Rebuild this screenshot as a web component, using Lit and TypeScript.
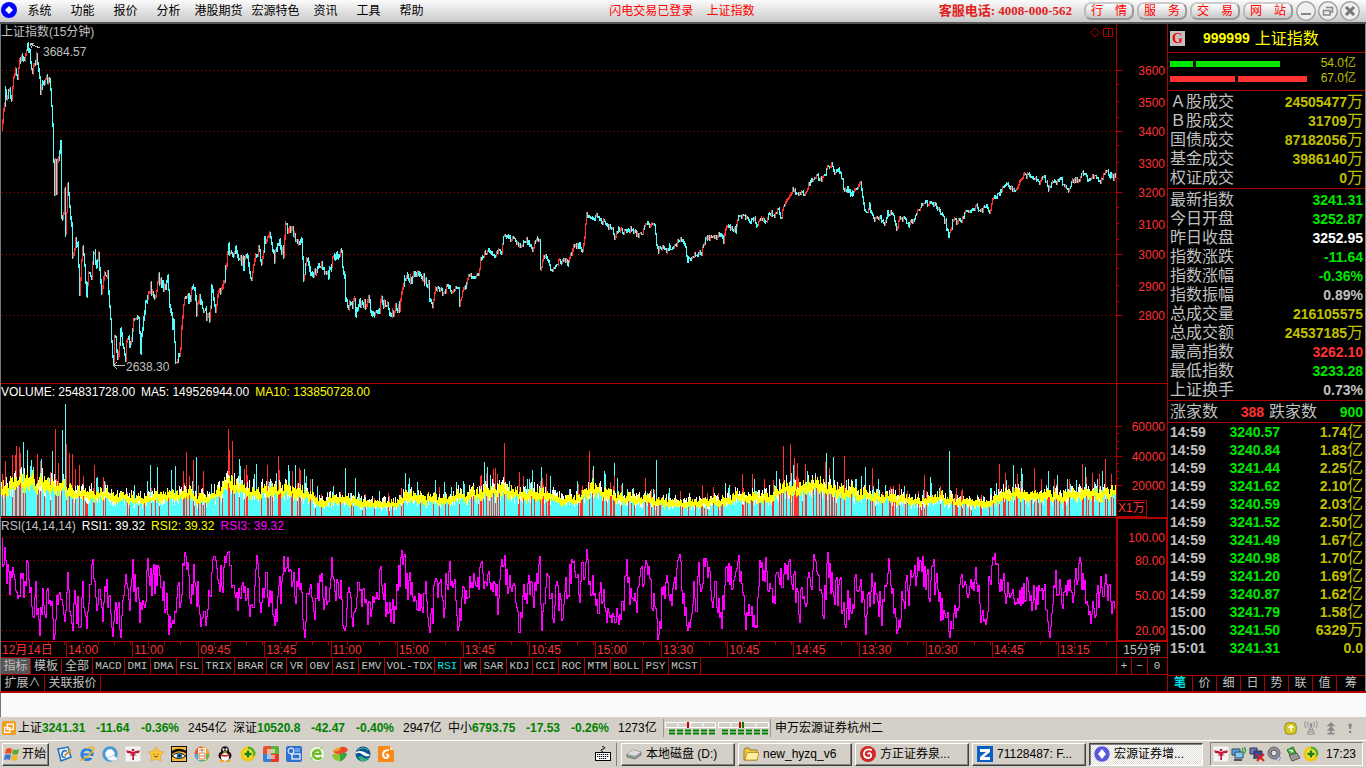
import { LitElement, html, svg, css } from "lit";
import { customElement, state } from "lit/decorators.js";
import { classMap } from "lit/directives/class-map.js";

type Point = [number, number];

/* ---------- chart data ---------- */

const PLOT_LEFT = 1;
const PLOT_WIDTH = 1115;

function randomSource(seed: number) {
  let s = seed;
  return () => {
    s = (s * 1664525 + 1013904223) % 4294967296;
    return s / 4294967296;
  };
}

function parsePoints(text: string): Point[] {
  return text.trim().split(/\s+/).map((p) => p.split(",").map(Number) as Point);
}

function sample(points: Point[], from: number, to: number): number[] {
  const out: number[] = [];
  let k = 0;
  for (let x = from; x <= to; x++) {
    while (k < points.length - 2 && points[k + 1][0] <= x) k++;
    const [x0, y0] = points[k];
    const [x1, y1] = points[k + 1];
    const t = x1 === x0 ? 1 : Math.max(0, Math.min(1, (x - x0) / (x1 - x0)));
    out.push(y0 + (y1 - y0) * t);
  }
  return out;
}

const PRICE = parsePoints(`
2,130 3,118 5,100 6,93 8,98 10,92 12,95 14,78 16,68 18,76 20,60 22,56 24,62 26,52 29,46 31,62 33,76 35,62 37,58 39,66
41,92 43,84 46,80 49,78 51,84 53,128 54,163 55,190 56,160 57,192 58,163 60,155 61,145 62,216 64,216 65,190 66,232 68,185
70,205 72,225 73,256 76,240 78,245 80,290 83,250 85,262 87,298 89,270 92,280 94,250 97,265 99,255 102,296 105,270 108,275
110,305 112,340 114,364 115,332 118,358 121,332 124,345 126,356 128,335 131,345 134,318 139,322 141,350 145,308 148,297
151,288 155,300 159,277 162,285 166,287 168,277 170,305 173,325 174,320 176,360 178,363 181,345 184,305 187,293 190,300
194,283 197,310 200,300 203,306 207,315 210,320 212,288 216,307 220,292 225,278 229,248 232,253 236,251 240,256 244,264
247,252 252,280 255,260 259,248 262,264 265,240 270,235 275,260 278,240 284,253 286,225 290,233 293,228 297,243 302,242
304,276 307,260 311,270 315,273 321,263 326,276 331,271 333,257 338,255 342,254 345,280 346,300 350,307 355,300 356,317
360,300 364,307 369,299 373,315 379,310 382,300 388,306 392,318 396,308 400,307 402,295 405,278 411,280 416,273 422,276
426,282 427,288 429,286 430,303 433,305 436,287 440,290 445,293 448,283 452,292 456,285 459,290 460,308 463,288 466,286
469,276 475,275 479,274 481,260 485,253 491,250 495,257 499,250 502,255 504,235 510,238 515,238 520,246 527,240 533,249
537,240 540,237 541,268 545,255 549,260 552,272 556,265 560,261 565,260 568,263 574,247 580,245 583,250 585,235 587,213
592,220 597,216 602,223 605,220 608,226 613,228 615,239 619,228 625,232 632,229 638,235 643,233 646,224 655,226 657,243
659,250 663,248 667,252 670,247 676,246 680,238 685,243 688,260 692,257 696,254 702,252 706,238 713,237 718,236 721,234
724,241 727,226 735,229 736,232 739,215 745,216 751,220 755,218 757,227 762,218 766,222 770,213 775,214 779,208 782,220
784,205 788,197 793,189 798,192 805,193 811,182 817,174 822,180 825,176 828,168 832,164 835,173 840,170 842,176 845,192
848,189 852,194 856,189 861,181 864,205 867,214 870,206 875,220 880,217 885,225 888,213 893,212 897,231 900,217 905,219
909,225 914,222 917,213 922,205 927,203 934,203 940,210 946,222 949,236 954,219 961,222 966,211 971,210 977,206 981,210
987,207 991,211 993,200 998,194 1003,188 1009,184 1013,189 1017,189 1022,177 1028,175 1034,178 1040,181 1044,175 1049,188
1054,182 1062,180 1068,191 1073,180 1080,180 1083,172 1090,181 1095,175 1101,183 1106,169 1110,175 1114,177 1116,175`);

function buildPrice() {
  const rnd = randomSource(7);
  const base = sample(PRICE, 2, 1116);
  const close = base.map((y, i) => y + (rnd() - 0.5) * (i < 430 ? 9 : 5));
  let up = "";
  let down = "";
  for (let i = 0; i < close.length - 1; i++) {
    const a = close[i];
    const b = close[i + 1];
    const wick = rnd() * (i < 430 ? 3 : 1.5);
    const top = Math.round(Math.min(a, b) - wick);
    const bottom = Math.round(Math.max(a, b) + wick * 0.7) + 1;
    const seg = `M${i + 2}.5 ${top}V${bottom}`;
    if (b < a - 0.6 && rnd() < 0.7) up += seg;
    else down += seg;
  }
  return { up, down };
}

const VOLUME_LEVEL = parsePoints(`
0,28 8,36 25,38 45,36 60,32 80,28 100,24 140,19 155,22 185,26 200,20 215,22 228,38 250,28 285,29 303,28 318,16 345,20
360,15 395,14 405,22 440,20 470,24 505,30 520,24 540,27 560,18 580,20 590,33 610,23 650,18 670,16 700,15 730,20 765,22
782,30 800,32 830,32 860,26 890,20 920,17 945,22 960,15 988,15 1005,26 1030,23 1080,24 1116,28`);

const VOLUME_SPIKES: [number, number, number][] = [
  [2, 42, 1], [5, 55, 1], [12, 61, 1], [16, 70, 1], [19, 69, 1], [23, 74, 0], [27, 66, 0], [37, 60, 0], [41, 57, 0],
  [52, 65, 0], [55, 87, 1], [58, 53, 1], [62, 86, 0], [65, 112, 0], [66, 72, 1], [69, 63, 1], [72, 62, 1], [79, 51, 1],
  [94, 51, 1], [150, 51, 0], [157, 49, 0], [171, 46, 0], [175, 50, 0], [186, 64, 1], [193, 56, 1], [196, 59, 0],
  [203, 45, 1], [228, 87, 1], [232, 75, 1], [239, 57, 0], [246, 51, 1], [256, 52, 0], [267, 51, 1], [278, 60, 1],
  [288, 51, 0], [295, 51, 0], [304, 47, 0], [345, 48, 0], [355, 38, 0], [405, 43, 0], [484, 54, 0], [487, 49, 0],
  [493, 47, 1], [504, 73, 1], [541, 49, 0], [550, 40, 0], [589, 65, 1], [592, 46, 1], [614, 53, 0], [656, 56, 0],
  [645, 38, 1], [702, 30, 1], [742, 42, 1], [752, 42, 1], [783, 70, 1], [790, 72, 1], [794, 58, 1], [797, 52, 1],
  [826, 63, 0], [833, 59, 0], [844, 60, 1], [855, 37, 0], [865, 49, 0], [872, 48, 1], [924, 41, 1], [930, 39, 0],
  [949, 65, 0], [999, 52, 1], [1013, 51, 0], [1021, 48, 0], [1034, 48, 1], [1048, 45, 0], [1057, 41, 0],
  [1082, 52, 1], [1085, 49, 0], [1105, 57, 1], [1111, 42, 1],
];

function buildVolume() {
  const rnd = randomSource(31);
  const level = sample(VOLUME_LEVEL, 1, 1115);
  const floor = 516;
  let up = "";
  let down = "";
  let ma5 = "";
  let ma10 = "";
  let drift = 0;
  level.forEach((h, i) => {
    const x = i + 1;
    drift = drift * 0.6 + (rnd() - 0.5) * h * 0.2;
    const m = h * 0.84 + drift;
    const roll = rnd();
    const tall = roll < 0.2 ? h * (1.1 + rnd() * 0.7) : m - 1;
    const seg = `M${x}.5 ${Math.round(floor - tall)}V${floor}`;
    if (rnd() < (roll < 0.2 ? 0.4 : 0.13)) up += seg;
    else down += seg;
    const mid = floor - m;
    if (rnd() < 0.45) ma5 += `M${x}.5 ${Math.round(mid - 3 - rnd() * h * 0.35)}V${Math.round(mid + 3)}`;
    else if (rnd() < 0.35) ma5 += `M${x}.5 ${Math.round(mid)}V${Math.round(mid + 3 + h * 0.2)}`;
    ma10 += `M${x}.5 ${Math.round(mid - 1 - rnd() * h * 0.25)}V${Math.round(mid + 2 + rnd() * h * 0.15)}`;
  });
  for (const [x, h, isUp] of VOLUME_SPIKES) {
    const seg = `M${x}.5 ${floor - h}V${floor}`;
    if (isUp) up += seg;
    else down += seg;
  }
  return { up, down, ma5, ma10 };
}

const RSI = parsePoints(`
2,538 3,578 5,549 7,580 10,583 13,565 15,595 19,578 22,566 24,588 28,574 31,595 33,620 36,588 40,626 44,590 47,600 50,585
54,638 58,588 64,625 68,582 72,620 76,600 80,618 83,588 87,615 93,572 98,605 101,588 104,605 107,583 113,638 116,600
121,622 126,578 130,600 133,570 140,625 148,567 152,590 160,566 167,610 172,628 176,605 181,590 186,556 190,600 194,578
201,605 207,620 212,570 218,592 222,574 229,564 235,590 241,600 247,595 252,618 257,570 261,605 266,567 270,590 274,620
280,600 285,566 289,580 293,597 299,585 305,635 309,590 314,620 320,577 325,600 332,566 336,590 340,585 345,635 350,590
355,618 360,580 366,605 370,618 375,600 381,571 386,600 391,620 396,600 403,560 407,590 413,580 420,605 426,590 430,633
435,590 440,575 444,600 449,568 454,590 459,626 463,590 467,600 471,580 477,590 481,559 488,590 494,578 498,600 504,564
508,590 514,595 519,622 523,600 527,585 532,600 536,576 540,567 542,635 546,590 552,610 558,598 563,605 569,580 575,567
580,595 587,552 590,580 594,585 599,615 604,580 609,615 615,625 620,600 627,580 633,597 640,585 646,570 651,590 655,600
658,639 663,590 668,597 674,580 679,563 684,600 688,634 694,595 700,580 706,555 711,590 717,597 722,610 728,570 733,590
739,563 744,605 750,618 756,625 760,580 766,570 771,600 778,580 785,578 790,570 796,595 802,600 810,580 816,566 823,610
828,568 835,590 841,600 846,626 852,590 860,572 866,630 871,590 877,600 883,610 890,575 898,630 902,600 908,588 914,585
921,561 927,590 933,580 940,600 943,620 950,625 957,595 965,566 970,590 976,574 983,612 987,600 992,561 997,575 1003,590
1009,600 1014,590 1021,588 1030,580 1036,605 1042,572 1050,630 1055,585 1062,600 1068,592 1076,590 1080,567 1086,605
1091,622 1095,600 1101,590 1106,567 1111,600 1114,615 1116,590`);

function buildRsi() {
  const rnd = randomSource(99);
  let swing = 0;
  const ys = sample(RSI, 2, 1115).map((y) => {
    swing = swing * 0.3 + (rnd() - 0.5) * 38;
    const edge = Math.min(1, Math.max(0.3, (45 - Math.abs(y - 594)) / 25));
    return Math.max(538, Math.min(639, y + swing * edge));
  });
  let d = "";
  for (let i = 0; i < ys.length - 1; i++) {
    const a = Math.round(Math.min(ys[i], ys[i + 1]));
    const b = Math.round(Math.max(ys[i], ys[i + 1])) + 1;
    d += `M${i + 2}.5 ${a}V${b}`;
  }
  return d;
}

const price = buildPrice();
const volume = buildVolume();
const rsi = buildRsi();

/* ---------- text data ---------- */

const MENUS = ["系统", "功能", "报价", "分析", "港股期货", "宏源特色", "资讯", "工具", "帮助"];
const TOP_BUTTONS = ["行情", "服务", "交易", "网站"];
const PRICE_LABELS: [string, number][] = [
  ["3600", 70], ["3500", 102], ["3400", 131], ["3300", 163], ["3200", 192],
  ["3100", 224], ["3000", 254], ["2900", 286], ["2800", 315],
];
const TIMES = ["12月14日", "14:00", "11:00", "09:45", "13:45", "11:00", "15:00", "13:45", "10:45", "15:00", "13:30",
  "10:45", "14:45", "13:30", "10:30", "14:45", "13:15"];
const TURNOVER = [["Ａ股成交", "24505477万"], ["Ｂ股成交", "31709万"], ["国债成交", "87182056万"],
  ["基金成交", "3986140万"], ["权证成交", "0万"]];
const QUOTES = [
  ["最新指数", "3241.31", "green"], ["今日开盘", "3252.87", "green"], ["昨日收盘", "3252.95", "white"],
  ["指数涨跌", "-11.64", "green"], ["指数涨幅", "-0.36%", "green"], ["指数振幅", "0.89%", "grey"],
  ["总成交量", "216105575", "gold"], ["总成交额", "24537185万", "gold"], ["最高指数", "3262.10", "red"],
  ["最低指数", "3233.28", "green"], ["上证换手", "0.73%", "grey"],
];
const TICKS = [
  ["14:59", "3240.57", "1.74亿"], ["14:59", "3240.84", "1.83亿"], ["14:59", "3241.44", "2.25亿"],
  ["14:59", "3241.62", "2.10亿"], ["14:59", "3240.59", "2.03亿"], ["14:59", "3241.52", "2.50亿"],
  ["14:59", "3241.49", "1.67亿"], ["14:59", "3240.98", "1.70亿"], ["14:59", "3241.20", "1.69亿"],
  ["14:59", "3240.87", "1.62亿"], ["15:00", "3241.79", "1.58亿"], ["15:00", "3241.50", "6329万"],
  ["15:01", "3241.31", "0.0"],
];
const SIDE_TABS = ["笔", "价", "细", "日", "势", "联", "值", "筹"];
const INDICATORS = ["MACD", "DMI", "DMA", "FSL", "TRIX", "BRAR", "CR", "VR", "OBV", "ASI", "EMV", "VOL-TDX", "RSI", "WR",
  "SAR", "KDJ", "CCI", "ROC", "MTM", "BOLL", "PSY", "MCST"];
const INDEXES = [
  ["上证", "3241.31", "-11.64", "-0.36%", "2454亿"],
  ["深证", "10520.8", "-42.47", "-0.40%", "2947亿"],
  ["中小", "6793.75", "-17.53", "-0.26%", "1273亿"],
];

/* ---------- icons, each on a 16 x 16 grid ---------- */

const dragonfly = svg`<rect width="16" height="16" rx="1" fill="#f4f4f4" stroke="#bbb" stroke-width=".6"/>
  <path d="M1 4.500Q5 4 8 6Q11 4 15 4.500L14 7Q11 7 9 8L12 9.500L9 9.500V14H7.300V9.500L4 9.500L7 8Q4 7 2 7Z" fill="#c01838"/><circle cx="8" cy="4" r="1.300" fill="#c01838"/>`;
const plusBall = svg`<circle cx="8" cy="8" r="7.500" fill="#f0c810"/><path d="M8 .5A7.500 7.500 0 0 1 15.500 8Q13 13 8 10Z" fill="#48b030"/>
  <circle cx="8" cy="8" r="5" fill="#f8e038"/><path d="M8 4.500V11.500M4.500 8H11.500" stroke="#188018" stroke-width="2.400"/>`;
const diamondBall = svg`<circle cx="8" cy="8" r="7.700" fill="#5858d8"/><path d="M8 3L12 8L8 13L4 8Z" fill="#fff"/>`;

const QUICK: [string, unknown][] = [
  ["显示桌面", svg`<path d="M2 3L12 1L15 11L5 15Z" fill="#e8f4ff" stroke="#2870b8" stroke-width="1.500"/><path d="M11 5Q7 3.500 6 7.500T9.500 11.500" fill="none" stroke="#2878c8" stroke-width="1.700"/><path d="M8 9L14 3L15.500 4.500L9.500 10.500Z" fill="#d89040"/>`],
  ["浏览器", svg`<circle cx="8" cy="8.500" r="5.200" fill="none" stroke="#2080e0" stroke-width="2.800"/><path d="M4 8.500H12.500" stroke="#2080e0" stroke-width="2.200"/><path d="M11 11H15" stroke="#d4d0c8" stroke-width="2"/><path d="M1 13Q0 16 6 12Q15 6 15 2Q13-.5 8 3" fill="none" stroke="#f0b020" stroke-width="1.500"/>`],
  ["云浏览器", svg`<circle cx="8" cy="8" r="6.200" fill="#fff" stroke="#4898d8" stroke-width="3"/><path d="M5 13Q6 10 9 10.500Q11 7.500 13 10.500Q16 11 15.500 14Q10 16.500 5 13Z" fill="#f4fbff" stroke="#88b8d8" stroke-width=".6"/>`],
  ["行情终端", dragonfly],
  ["收藏", svg`<path d="M8 .5L10.500 5L15.500 6L12.300 10L13 15L8 13L3 15L3.700 10L.5 6L5.500 5Z" fill="#f8c838" stroke="#e8a020" stroke-width=".6" stroke-linejoin="round"/><path d="M6 10Q8 12 10 10M6 7.500V8.500M10 7.500V8.500" fill="none" stroke="#784010" stroke-width="1"/>`],
  ["看图", svg`<rect width="16" height="16" fill="#f8b838"/><path d="M0 6Q6 0 16 5V8Q8 2 0 9Z" fill="#111"/><path d="M1 10Q7 4 15 10Q8 15 1 10Z" fill="#fff" stroke="#111"/><circle cx="8.500" cy="9.800" r="2.800" fill="#2878a8"/><circle cx="8.500" cy="9.800" r="1.200" fill="#111"/><path d="M0 .5H16M0 15.500H16M.5 0V16M15.500 0V16" stroke="#111"/>`],
  ["百科", svg`<circle cx="8" cy="8" r="7.500" fill="#f0a030"/><path d="M8 .5A7.500 7.500 0 0 0 .5 8H8Z" fill="#e85838"/><path d="M.5 8A7.500 7.500 0 0 0 8 15.500V8Z" fill="#48a8d8"/><path d="M8 15.500A7.500 7.500 0 0 0 15.500 8H8Z" fill="#60b848"/><rect x="4" y="2" width="8" height="12" fill="#fff"/><path d="M5 4H11M8 2V6M5 7H11M5 7V13H11V7M5 10H11" stroke="#d87838" fill="none"/>`],
  ["企鹅", svg`<ellipse cx="8" cy="9.500" rx="6.500" ry="5" fill="#111"/><ellipse cx="8" cy="4.500" rx="4" ry="4.300" fill="#111"/><ellipse cx="8" cy="11" rx="4" ry="4" fill="#fff"/><path d="M3.500 7.500Q8 10.500 12.500 7.500V9.500Q8 12 3.500 9.500Z" fill="#d82020"/><ellipse cx="6.500" cy="3.500" rx="1" ry="1.300" fill="#fff"/><ellipse cx="9.500" cy="3.500" rx="1" ry="1.300" fill="#fff"/><ellipse cx="8" cy="6" rx="2.200" ry=".8" fill="#f8b020"/><ellipse cx="5" cy="15" rx="2.500" ry="1" fill="#f0a010"/><ellipse cx="11" cy="15" rx="2.500" ry="1" fill="#f0a010"/>`],
  ["安全卫士", plusBall],
  ["办公套件", svg`<rect width="16" height="16" rx="2" fill="#e85030"/><path d="M8 0H14Q16 0 16 2V8H8Z" fill="#60b038"/><path d="M0 8H8V16H2Q0 16 0 14Z" fill="#3880d0"/><path d="M8 8H16V14Q16 16 14 16H8Z" fill="#e83828"/><path d="M4 3H8V13H4ZM8 3H12V7H8ZM8 9H12V13H8Z" fill="#fff" fill-opacity=".55"/>`],
  ["邮件", svg`<rect width="16" height="16" rx="2" fill="#3070d0"/><rect x="6" y="8" width="8" height="5" fill="none" stroke="#fff" stroke-width="1.200"/><circle cx="5" cy="5" r="2.800" fill="none" stroke="#d8e8ff" stroke-width="1.200"/><path d="M9 3H14M9 5H14" stroke="#a8c8f8"/>`],
  ["极速浏览器", svg`<circle cx="8" cy="8" r="7.500" fill="#f0f8e8" stroke="#a8d090" stroke-width=".6"/><path d="M12.500 11.500Q8 14.500 5 11T6.500 4.500Q11 3 11.500 8H4.500" fill="none" stroke="#68b828" stroke-width="2.200"/><path d="M3 14Q0 11 14 1" fill="none" stroke="#90c850"/>`],
  ["风车", svg`<path d="M7 9Q1 8 1 5Q4 1 11 1Q14 2 14 5Z" fill="#f0a020"/><path d="M9 1Q14 0 16 4Q14 7 9 8Q3 8 1 5Q8 7 9 1Z" fill="#e84830"/><path d="M7 9Q12 5 15 8Q14 13 7 16Q9 12 7 9Z" fill="#38a040"/><path d="M0 9Q4 7 7 9Q9 12 6 15Q1 14 0 9Z" fill="#88c828"/>`],
  ["通达信", svg`<circle cx="8" cy="8" r="7.500" fill="#085890"/><path d="M1 6Q5 4 9 6L15 9Q14 11 10 10L5 7Q3 6 1 8Z" fill="#fff"/><path d="M3 11Q7 9 9 12Q12 14 14 11Q12 15.500 8 15.500Q5 15 3 11Z" fill="#38b078"/><path d="M3 4Q8 0 13 4" stroke="#58b8a0" fill="none"/>`],
  ["福昕", svg`<path d="M0 0H12L16 4V16H0Z" fill="#f88818"/><path d="M12 0V4H16Z" fill="#ffe0b8"/><path d="M11 4Q5 4 5 9Q6 13 9.500 11.500Q12 9 8 8.500" fill="none" stroke="#fff" stroke-width="2"/>`],
];

const TASKS: [string, boolean, unknown][] = [
  ["本地磁盘 (D:)", false, svg`<path d="M1 8L7 4L15 6V9L9 13L1 11Z" fill="#999" stroke="#555" stroke-width=".6"/><path d="M1 8L7 4L15 6L9 10Z" fill="#ddd"/><path d="M3 10L6 11" stroke="#4c4"/>`],
  ["new_hyzq_v6", false, svg`<path d="M1 4L2 2H6L7 4H14V14H1Z" fill="#f0c840" stroke="#906810" stroke-width=".8"/><path d="M2 14L4 6.500H16L14 14Z" fill="#fff0a0" stroke="#b08818" stroke-width=".8"/>`],
  ["方正证券泉...", false, svg`<circle cx="8" cy="8" r="8" fill="#d02828"/><path d="M12 4Q5 2 4 7T9 12Q12 11 11 8.500T7.500 8" fill="none" stroke="#fff" stroke-width="1.800"/>`],
  ["71128487: F...", false, svg`<rect width="16" height="16" fill="#0860c0"/><path d="M3 3H13V6L7 11H13V14H3V11L9 6H3Z" fill="#fff"/>`],
  ["宏源证券增...", true, diamondBall],
];

const TRAY = [
  dragonfly,
  svg`<path d="M1 3H9V9H1Z" fill="#58a8e8" stroke="#345"/><path d="M4 6H12V12H4Z" fill="#88c8f8" stroke="#345"/><path d="M3 14H11" stroke="#556" stroke-width="2"/><path d="M11 2Q13 4 11 7M13 1Q16 4 13 8" stroke="#20a030" fill="none" stroke-width="1.200"/>`,
  svg`<path d="M1 2H8V8H1Z" fill="#6878c8" stroke="#334"/><path d="M5 5H13V11H5Z" fill="#384898" stroke="#334"/><path d="M4 12H11" stroke="#556" stroke-width="2"/><path d="M8 8L15 15M15 8L8 15" stroke="#e02020" stroke-width="2"/>`,
  svg`<circle cx="7" cy="7" r="6" fill="#909098" stroke="#666"/><circle cx="7" cy="7" r="3" fill="#d8d8e0" stroke="#555"/><path d="M12 10Q15 12 11 15M10 10Q12 12 9 14" stroke="#7888c8" fill="none"/>`,
  svg`<path d="M2 4L8 1L11 7L5 9Z" fill="#48b838" stroke="#286818"/><path d="M4 9L12 7L15 12L7 15Z" fill="#989898" stroke="#555"/><path d="M4 4L8 5L6 6" stroke="#fff" fill="none"/>`,
  plusBall,
];

const icon = (content: unknown, cls = "icon") =>
  html`<svg class=${cls} viewBox="0 0 16 16" aria-hidden="true">${content}</svg>`;

/* ---------- components ---------- */

const base = css`
  :host { display: block; font: 12px/16px "Liberation Sans", "Noto Sans CJK SC", sans-serif; }
  * { box-sizing: border-box; }
  button { font: inherit; color: inherit; background: none; border: 0; margin: 0; padding: 0; white-space: nowrap; }
  svg { display: block; }
  .red { color: #ff3232; } .green { color: #00e600; } .white { color: #fff; }
  .grey { color: #c0c0c0; } .gold { color: #c0c000; }
`;

@customElement("title-bar")
class TitleBar extends LitElement {
  static styles = [base, css`
    .bar { display: flex; align-items: center; height: 24px; padding: 0 4px 0 0; border-bottom: 2px solid #555;
      background: linear-gradient(#fbfbfb, #c9c9c9); color: #000; }
    .logo { width: 16px; height: 16px; margin: 0 1px 2px 1px; }
    .menu { width: 43px; height: 20px; }
    .menu.long { width: 57px; }
    .notice { flex: 1; display: flex; justify-content: center; gap: 13px; color: #f00; padding-right: 8px; }
    .phone { font: bold 13px/16px "Liberation Serif", "Noto Sans CJK SC", serif; color: #e02020; margin-right: 12px; }
    .top { display: flex; justify-content: space-between; width: 50px; height: 18px; margin-right: 3px; padding: 0 5px;
      line-height: 14px; border: 2px solid #999; border-top-color: #ccc; border-left-color: #bbb; border-radius: 7px;
      background: linear-gradient(#fff, #c8c8c8); color: #f00; }
    .round { width: 20px; height: 20px; margin-right: 2px; }
    .round svg { width: 20px; height: 20px; }
  `];
  render() {
    const glyphs = [
      svg`<path d="M5 13H15" stroke="#888" stroke-width="2"/>`,
      svg`<path d="M8 6.500H14.500V11H12M5.500 9.500H12V14H5.500Z" stroke="#888" stroke-width="1.500" fill="none"/>`,
      svg`<path d="M6 6L14 14M14 6L6 14" stroke="#777" stroke-width="3"/>`,
    ];
    const names = ["最小化", "还原", "关闭"];
    return html`<header class="bar">
      <svg class="logo" viewBox="0 0 16 16" aria-hidden="true"><circle cx="8" cy="8" r="8" fill="#00f"/><path d="M8 4L12 8L8 12L4 8Z" fill="#fff"/></svg>
      ${MENUS.map((m) => html`<button class=${classMap({ menu: true, long: m.length > 2 })}>${m}</button>`)}
      <div class="notice"><span>闪电交易已登录</span><span>上证指数</span></div>
      <span class="phone">客服电话: 4008-000-562</span>
      ${TOP_BUTTONS.map((b) => html`<button class="top"><span>${b[0]}</span><span>${b[1]}</span></button>`)}
      ${glyphs.map((g, i) => html`<button class="round" aria-label=${names[i]}><svg viewBox="0 0 20 20">
        <circle cx="10" cy="10" r="9.300" fill="#eee" stroke="#999" stroke-width="1.300"/>${g}</svg></button>`)}
    </header>`;
  }
}

@customElement("chart-board")
class ChartBoard extends LitElement {
  @state() private active = "RSI";

  static styles = [base, css`
    :host { color: #c0c0c0; }
    .panels { display: grid; grid-template-columns: minmax(0, 1fr) 51px; }
    .plot, .axis { border-bottom: 1px solid #b00000; }
    .plot { position: relative; }
    .axis { border-left: 1px solid #b00000; position: relative; }
    .plot svg { width: 100%; }
    .axis svg { width: 50px; }
    .price svg { height: 359px; }
    .volume svg { height: 133px; }
    .rsi svg { height: 123px; }
    .axis.rsi { box-shadow: inset 0 0 0 1px #b00000; }
    svg { shape-rendering: crispEdges; }
    .axis text { font: 12px "Liberation Sans", sans-serif; fill: #ff3232; text-anchor: end; }
    .legend { position: absolute; left: 0; top: 0; display: flex; gap: 6px; white-space: nowrap; }
    .note { position: absolute; line-height: 14px; }
    .tools { position: absolute; right: 2px; top: 2px; }
    .plot .tools svg { width: 24px; height: 14px; shape-rendering: auto; }
    .unit { position: absolute; left: 0; bottom: 0; width: 30px; height: 17px; line-height: 15px; padding-left: 1px;
      border: 1px solid #b00000; border-left: 0; color: #ff3232; }
    .yellow { color: #ff0; } .magenta { color: #f0f; }
    .times { display: flex; height: 16px; border-bottom: 1px solid #b00000; line-height: 16px; color: #ff3232; overflow: hidden; }
    .times span { flex: 66 66 0; padding-left: 1px; border-left: 1px solid #b00000; white-space: nowrap; min-width: 0;
      background: repeating-linear-gradient(90deg, transparent 0 15px, #b00000 15px 16px) top / 100% 3px no-repeat; }
    .times span:first-child { border-left: 0; }
    .times span:last-child { flex-grow: 58; flex-shrink: 58; }
    .period { border-left: 1px solid #b00000; border-bottom: 1px solid #b00000; height: 16px; text-align: center; }
    .row { display: flex; height: 17px; border-bottom: 1px solid #b00000; }
    .row.last { height: 16px; border-bottom: 0; }
    .row button { border-right: 1px solid #b00000; line-height: 15px; }
    .word { width: 31px; }
    .row .picked { background: #555; width: 30px; }
    .row .code { font: 11px/16px "Liberation Mono", monospace; }
    .row .code.on { color: #00e6e6; }
    .zoom { display: grid; grid-template-columns: 15px 16px 18px; border-left: 1px solid #b00000; border-bottom: 1px solid #b00000; height: 17px; }
    .zoom button { border-right: 1px solid #b00000; font: 11px/15px "Liberation Mono", monospace; }
    .zoom button:last-child { border-right: 0; }
    .more { width: 44px; }
    .wide { width: 56px; }
  `];

  private grid(ys: number[]) {
    const d = ys.map((y) => `M2 ${y}.5H1116`).join("");
    return svg`<path d=${d} stroke="#c00000" stroke-dasharray="1 3" fill="none"/>`;
  }

  private axisTicks(long: number[], short: number[]) {
    const d = long.map((y) => `M0 ${y}.5H5`).join("") + short.map((y) => `M0 ${y}.5H2`).join("");
    return svg`<path d=${d} stroke="#b00000"/>`;
  }

  private labels(items: [string, number][]) {
    return items.map(([t, y]) => svg`<text x="48" y=${y + 5}>${t}</text>`);
  }

  private left(x: number) {
    return `left:${((x - PLOT_LEFT) / PLOT_WIDTH) * 100}%`;
  }

  render() {
    return html`
      <section class="panels">
        <div class="plot price">
          <svg viewBox="1 24 1115 359" preserveAspectRatio="none" role="img" aria-label="上证指数15分钟走势">
            ${this.grid([70, 131, 192, 254, 315])}
            <path d=${price.up} stroke="#ff3232"/><path d=${price.down} stroke="#54fcfc"/>
            <path d="M30 44L40 48M30 44L34 43M30 44L32 48M114 365.500H125M114 365.500L117 362M114 365.500L117 369" stroke="#c0c0c0" fill="none"/>
          </svg>
          <div class="legend"><span>上证指数(15分钟)</span></div>
          <span class="note" style="${this.left(43)};top:21px">3684.57</span>
          <span class="note" style="${this.left(126)};top:336px">2638.30</span>
          <div class="tools"><svg viewBox="0 0 24 14" aria-hidden="true"><path d="M5 2L9.500 6.500L5 11L.5 6.500ZM13.500 2.500H22.500V10.500H13.500ZM18.500 2.500V10.500" stroke="#b00000" fill="none"/></svg></div>
        </div>
        <div class="axis price">
          <svg viewBox="0 24 50 359">${this.axisTicks([70, 131, 192, 254, 315], [84, 101, 117, 145, 162, 178, 207, 223, 239, 268, 285, 301])}${this.labels(PRICE_LABELS)}</svg>
        </div>
        <div class="plot volume">
          <svg viewBox="1 384 1115 133" preserveAspectRatio="none" role="img" aria-label="成交量">
            ${this.grid([426, 456, 485])}
            <path d=${volume.down} stroke="#54fcfc"/><path d=${volume.up} stroke="#ff3232"/>
            <path d=${volume.ma5} stroke="#fff"/><path d=${volume.ma10} stroke="#ff0"/>
          </svg>
          <div class="legend white"><span>VOLUME: 254831728.00</span><span>MA5: 149526944.00</span><span class="yellow">MA10: 133850728.00</span></div>
        </div>
        <div class="axis volume">
          <svg viewBox="0 384 50 133">${this.axisTicks([426, 456, 485], [433, 441, 448, 463, 471, 478])}${this.labels([["60000", 426], ["40000", 456], ["20000", 485]])}</svg>
          <span class="unit">X1万</span>
        </div>
        <div class="plot rsi">
          <svg viewBox="1 518 1115 123" preserveAspectRatio="none" role="img" aria-label="RSI">
            ${this.grid([537, 560, 595, 630])}<path d=${rsi} stroke="#f0f"/>
          </svg>
          <div class="legend"><span>RSI(14,14,14)</span><span class="white">RSI1: 39.32</span><span class="yellow">RSI2: 39.32</span><span class="magenta">RSI3: 39.32</span></div>
        </div>
        <div class="axis rsi">
          <svg viewBox="0 518 50 123">${this.labels([["100.00", 537], ["80.00", 560], ["50.00", 595], ["20.00", 630]])}</svg>
        </div>
        <div class="times">${TIMES.map((t) => html`<span>${t}</span>`)}</div>
        <div class="period">15分钟</div>
        <div class="row">
          <button class="picked">指标</button><button class="word">模板</button><button class="word">全部</button>
          ${INDICATORS.map((n) => html`<button class=${classMap({ code: true, on: n === this.active })}
            style="width:${n.length * 6 + 8}px" @click=${() => (this.active = n)}>${n}</button>`)}
        </div>
        <div class="zoom"><button aria-label="放大">+</button><button aria-label="缩小">−</button><button>0</button></div>
      </section>
      <div class="row last"><button class="more">扩展∧</button><button class="wide">关联报价</button></div>`;
  }
}

@customElement("quote-side")
class QuoteSide extends LitElement {
  @state() private tab = 0;

  static styles = [base, css`
    :host { display: flex; flex-direction: column; border-left: 1px solid #b00000; border-right: 1px solid #888; color: #c0c0c0;
      font-size: 16px; line-height: 19px; }
    .block { border-bottom: 1px solid #b00000; }
    .head { display: flex; align-items: center; height: 29px; padding-left: 2px; gap: 5px; color: #ff0; }
    .badge { width: 15px; height: 15px; margin-right: 13px; background: #c0c0c0; color: #f00; text-align: center;
      font: bold 14px/15px "Liberation Serif", serif; }
    .code { font-size: 14px; font-weight: bold; }
    .bars { height: 38px; padding: 3px 9px 0 2px; }
    .bar { display: flex; gap: 3px; align-items: center; height: 15px; font-size: 12px; }
    .bar i { height: 6px; }
    .bar .up { background: #ff3232; } .bar .down { background: #00e600; }
    .bar span { margin-left: auto; }
    table { width: 100%; border-collapse: collapse; table-layout: fixed; }
    .wrap { padding: 1px 0; }
    th, td { padding: 0 2px; font-weight: normal; text-align: left; height: 19px; line-height: 18px; white-space: nowrap; }
    td { text-align: right; }
    th { width: 74px; }
    b { font-size: 14px; line-height: 14px; }
    .breadth { display: grid; grid-template-columns: 48px 46px 1fr auto; align-items: center; height: 22px; padding: 0 2px; }
    .breadth b:nth-child(2) { text-align: right; }
    .breadth span:nth-child(3) { padding-left: 5px; }
    .ticks td { height: 18px; line-height: 18px; }
    .ticks td:first-child { text-align: left; width: 45px; }
    .ticks td:nth-child(2) { width: 69px; }
    .tabs { display: grid; grid-template-columns: repeat(7, 24px) 1fr; margin-top: auto; border-top: 1px solid #b00000; height: 16px; }
    .tabs button { font-size: 12px; line-height: 15px; border-left: 1px solid #b00000; }
    .tabs button:first-child { border-left: 0; }
    .tabs .on { color: #00e6e6; font-weight: bold; }
  `];

  private value(text: string) {
    const m = text.match(/^([^万亿]*)([万亿]?)$/)!;
    return html`<b>${m[1]}</b>${m[2]}`;
  }

  private sheet(rows: string[][]) {
    return html`<div class="block wrap"><table>${rows.map(([k, v, c]) =>
      html`<tr><th scope="row">${k}</th><td class=${c ?? "gold"}>${this.value(v)}</td></tr>`)}</table></div>`;
  }

  render() {
    return html`
      <div class="block head"><span class="badge">G</span><span class="code">999999</span><span>上证指数</span></div>
      <div class="block bars">
        <div class="bar"><i class="down" style="width:23px"></i><i class="down" style="width:84px"></i><span class="gold">54.0亿</span></div>
        <div class="bar"><i class="up" style="width:65px"></i><i class="up" style="width:69px"></i><span class="gold">67.0亿</span></div>
      </div>
      ${this.sheet(TURNOVER)}
      ${this.sheet(QUOTES)}
      <div class="block breadth"><span>涨家数</span><b class="red">388</b><span>跌家数</span><b class="green">900</b></div>
      <table class="ticks">${TICKS.map(([t, p, v]) => html`<tr><td><b>${t}</b></td><td class="green"><b>${p}</b></td><td class="gold">${this.value(v)}</td></tr>`)}</table>
      <div class="tabs">${SIDE_TABS.map((t, i) => html`<button class=${classMap({ on: i === this.tab })} @click=${() => (this.tab = i)}>${t}</button>`)}</div>`;
  }
}

@customElement("status-strip")
class StatusStrip extends LitElement {
  static styles = [base, css`
    .strip { display: flex; align-items: center; height: 22px; padding: 0 8px 0 2px; background: #d4d0c8; color: #000; }
    .icon { width: 14px; height: 14px; margin-right: 2px; }
    .index { display: grid; grid-template-columns: 24px 54px 45px 47px 1fr; width: 215px; white-space: nowrap; }
    .index b { color: #008000; }
    .meters { display: flex; gap: 2px; padding: 0 1px; border: 1px solid #999; border-width: 0 1px; height: 18px; align-items: center; margin-right: 4px; }
    .meter { width: 51px; height: 14px; }
    .tail { display: flex; gap: 6px; margin-left: auto; }
    .tail .icon { margin: 0; }
  `];
  private meter(marks: unknown) {
    return html`<svg class="meter" viewBox="0 0 51 14" aria-hidden="true">
      <path d="M.5 1.500H50.500V6.500H.5ZM13 1V7M25.500 1V7M38 1V7" stroke="#fff" fill="none"/>${marks}
      <path d="M4 9.500H50M4 12.500H50" stroke="#008000" stroke-width="2" stroke-dasharray="6 2"/></svg>`;
  }
  render() {
    return html`<div class="strip">
      ${icon(svg`<rect width="16" height="16" rx="2" fill="#f0a020"/><path d="M6 3.500H13V9.500H6ZM3 7.500H9V13H3Z" stroke="#fff" stroke-width="1.500" fill="#f0a020"/>`)}
      ${INDEXES.map(([n, v, c, p, a]) => html`<div class="index"><span>${n}</span><b>${v}</b><b>${c}</b><b>${p}</b><span>${a}</span></div>`)}
      <div class="meters">
        ${this.meter(svg`<path d="M23 1V7" stroke="#c00000" stroke-width="2"/>`)}
        ${this.meter(svg`<path d="M22 1V7" stroke="#c00000" stroke-width="2"/><path d="M25 1V7" stroke="#008000" stroke-width="2"/>`)}
      </div>
      <span>申万宏源证券杭州二</span>
      <div class="tail">
        ${icon(svg`<rect x="1" y="2" width="13" height="13" rx="4" fill="#d8c820" stroke="#888010"/><path d="M8 12V5M5 8L8 5L11 8" stroke="#fff" stroke-width="1.600" fill="none"/>`)}
        ${icon(svg`<path d="M8 5L4 15H12ZM6 10H10M5 12.500H11" stroke="#888" fill="none"/><path d="M5 1Q3 4 5 7M2 0Q-.5 4 2 8M11 1Q13 4 11 7M14 0Q16.500 4 14 8" stroke="#888" fill="none"/><circle cx="8" cy="4" r="1.500" fill="#888"/>`)}
        ${icon(svg`<path d="M8 1L13 6H3ZM8 6L13 11H3Z" fill="#888"/><path d="M8 5V13M4 14.500H12" stroke="#888" stroke-width="2"/>`)}
        ${icon(svg`<path d="M5 3H9L8 9H6Z" fill="#888"/><circle cx="7" cy="12.500" r="1.500" fill="#888"/>`)}
      </div>
    </div>`;
  }
}

@customElement("task-bar")
class TaskBar extends LitElement {
  static styles = [base, css`
    .bar { display: flex; align-items: center; height: 29px; padding: 0 3px 0 2px; border-top: 1px solid #d4d0c8;
      background: #d4d0c8; box-shadow: inset 0 1px #fff; color: #000; }
    .icon { width: 16px; height: 16px; flex: none; }
    .start, .task { display: flex; align-items: center; height: 23px; border: 1px solid; border-color: #fff #404040 #404040 #fff;
      box-shadow: inset -1px -1px #808080; }
    .start { width: 47px; padding-left: 1px; gap: 2px; }
    .quick { display: flex; gap: 7px; margin-left: 7px; }
    .keys { width: 16px; height: 16px; margin-left: auto; margin-right: 5px; }
    .tasks { display: flex; gap: 3px; padding-left: 4px; border-left: 1px solid #808080; }
    .task { width: 114px; padding-left: 4px; gap: 4px; overflow: hidden; }
    .task.on { border-color: #404040 #fff #fff #404040; box-shadow: inset 1px 1px #808080;
      background: repeating-conic-gradient(#fff 0 25%, #dedbd5 0 50%) 0 0 / 2px 2px; }
    .tray { display: flex; align-items: center; gap: 2px; width: 153px; height: 24px; margin-left: 7px; padding: 0 6px 0 2px;
      border: 1px solid; border-color: #808080 #fff #fff #808080; }
    .clock { margin-left: auto; }
  `];
  render() {
    return html`<footer class="bar">
      <button class="start">${icon(svg`<path d="M2 3Q5 1 8 3L7 8Q4 6.500 1 8Z" fill="#e85020"/><path d="M9 3Q12 5 15 3L14 8Q11 9.500 8 8Z" fill="#58a830"/><path d="M1 9Q4 7.500 7 9L6 14Q3 12.500 0 14Z" fill="#3878d8"/><path d="M8 9Q11 10.500 14 9L13 14Q10 15.500 7 14Z" fill="#f0b820"/>`)}开始</button>
      <nav class="quick">${QUICK.map(([name, g]) => html`<button aria-label=${name}>${icon(g)}</button>`)}</nav>
      <svg class="keys" viewBox="0 0 16 16" aria-hidden="true"><path d="M8 6Q4 4 8 3T7 0" stroke="#000" fill="none"/><rect x=".5" y="6.500" width="15" height="8" fill="#fff" stroke="#000"/><path d="M2 8.500H14M2 10.500H14M4 12.500H12" stroke="#000" stroke-dasharray="1.300 .7"/></svg>
      <div class="tasks">${TASKS.map(([name, on, g]) => html`<button class=${classMap({ task: true, on })}>${icon(g)}<span>${name}</span></button>`)}</div>
      <div class="tray">${TRAY.map((g) => icon(g))}<span class="clock">17:23</span></div>
    </footer>`;
  }
}

@customElement("app-root")
class AppRoot extends LitElement {
  static styles = css`
    :host { display: flex; flex-direction: column; min-height: 100vh; background: #fafafa; }
    .main { display: grid; grid-template-columns: minmax(0, 1fr) 199px; background: #000; border-left: 1px solid #777;
      border-bottom: 2px solid #b00000; }
    .blank { flex: 1; min-height: 24px; border-left: 1px solid #777; }
  `;
  render() {
    return html`
      <title-bar></title-bar>
      <main class="main"><chart-board></chart-board><quote-side></quote-side></main>
      <div class="blank"></div>
      <status-strip></status-strip>
      <task-bar></task-bar>`;
  }
}
